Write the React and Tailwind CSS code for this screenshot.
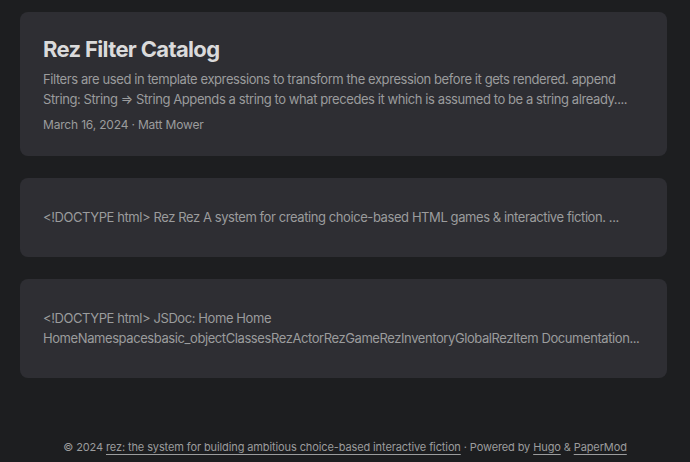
const posts = [
  {
    title: "Rez Filter Catalog",
    summary:
      "Filters are used in template expressions to transform the expression before it gets rendered. append String: String \u21D2 String Appends a string to what precedes it which is assumed to be a string already....",
    meta: "March 16, 2024 \u00B7 Matt Mower",
  },
  {
    summary:
      "<!DOCTYPE html> Rez Rez A system for creating choice-based HTML games & interactive fiction. ...",
  },
  {
    summary:
      "<!DOCTYPE html> JSDoc: Home Home HomeNamespacesbasic_objectClassesRezActorRezGameRezInventoryGlobalRezItem Documentation...",
  },
];

const PostEntry = ({ title, summary, meta }) => (
  <article
    className={
      "rounded-lg bg-[#2e2e33] px-[23px] " +
      (title ? "pt-[24px] pb-[21px]" : "pt-[29px] pb-[30px]")
    }
  >
    {title && (
      <h2 className="text-[22px] leading-[26px] font-bold tracking-[-0.03em] text-[#dadadb] mb-[7px]">
        {title}
      </h2>
    )}
    <p className="text-[13px] leading-[20px] tracking-[-0.032em] text-[#9b9c9d]">
      {summary}
    </p>
    {meta && (
      <div className="mt-[6px] text-[12px] leading-[20px] tracking-[-0.015em] text-[#9b9c9d]">
        {meta}
      </div>
    )}
  </article>
);

export default function App() {
  return (
    <div
      className="min-h-[462px] bg-[#1d1e20] flex flex-col"
      style={{ fontFamily: "Inter, 'Noto Sans', sans-serif" }}
    >
      <main className="pl-5 pr-[23px] pt-3 flex flex-col gap-[22px]">
        {posts.map((p, i) => (
          <PostEntry key={i} {...p} />
        ))}
      </main>
      <footer className="mt-auto pb-[5px] text-center text-[11px] leading-[20px] tracking-[-0.01em] text-[#9b9c9d]">
        <span>© 2024 </span>
        <a href="#" className="underline underline-offset-[3px]">
          rez: the system for building ambitious choice-based interactive fiction
        </a>
        <span> · Powered by </span>
        <a href="#" className="underline underline-offset-[3px]">
          Hugo
        </a>
        <span> &amp; </span>
        <a href="#" className="underline underline-offset-[3px]">
          PaperMod
        </a>
      </footer>
    </div>
  );
}
